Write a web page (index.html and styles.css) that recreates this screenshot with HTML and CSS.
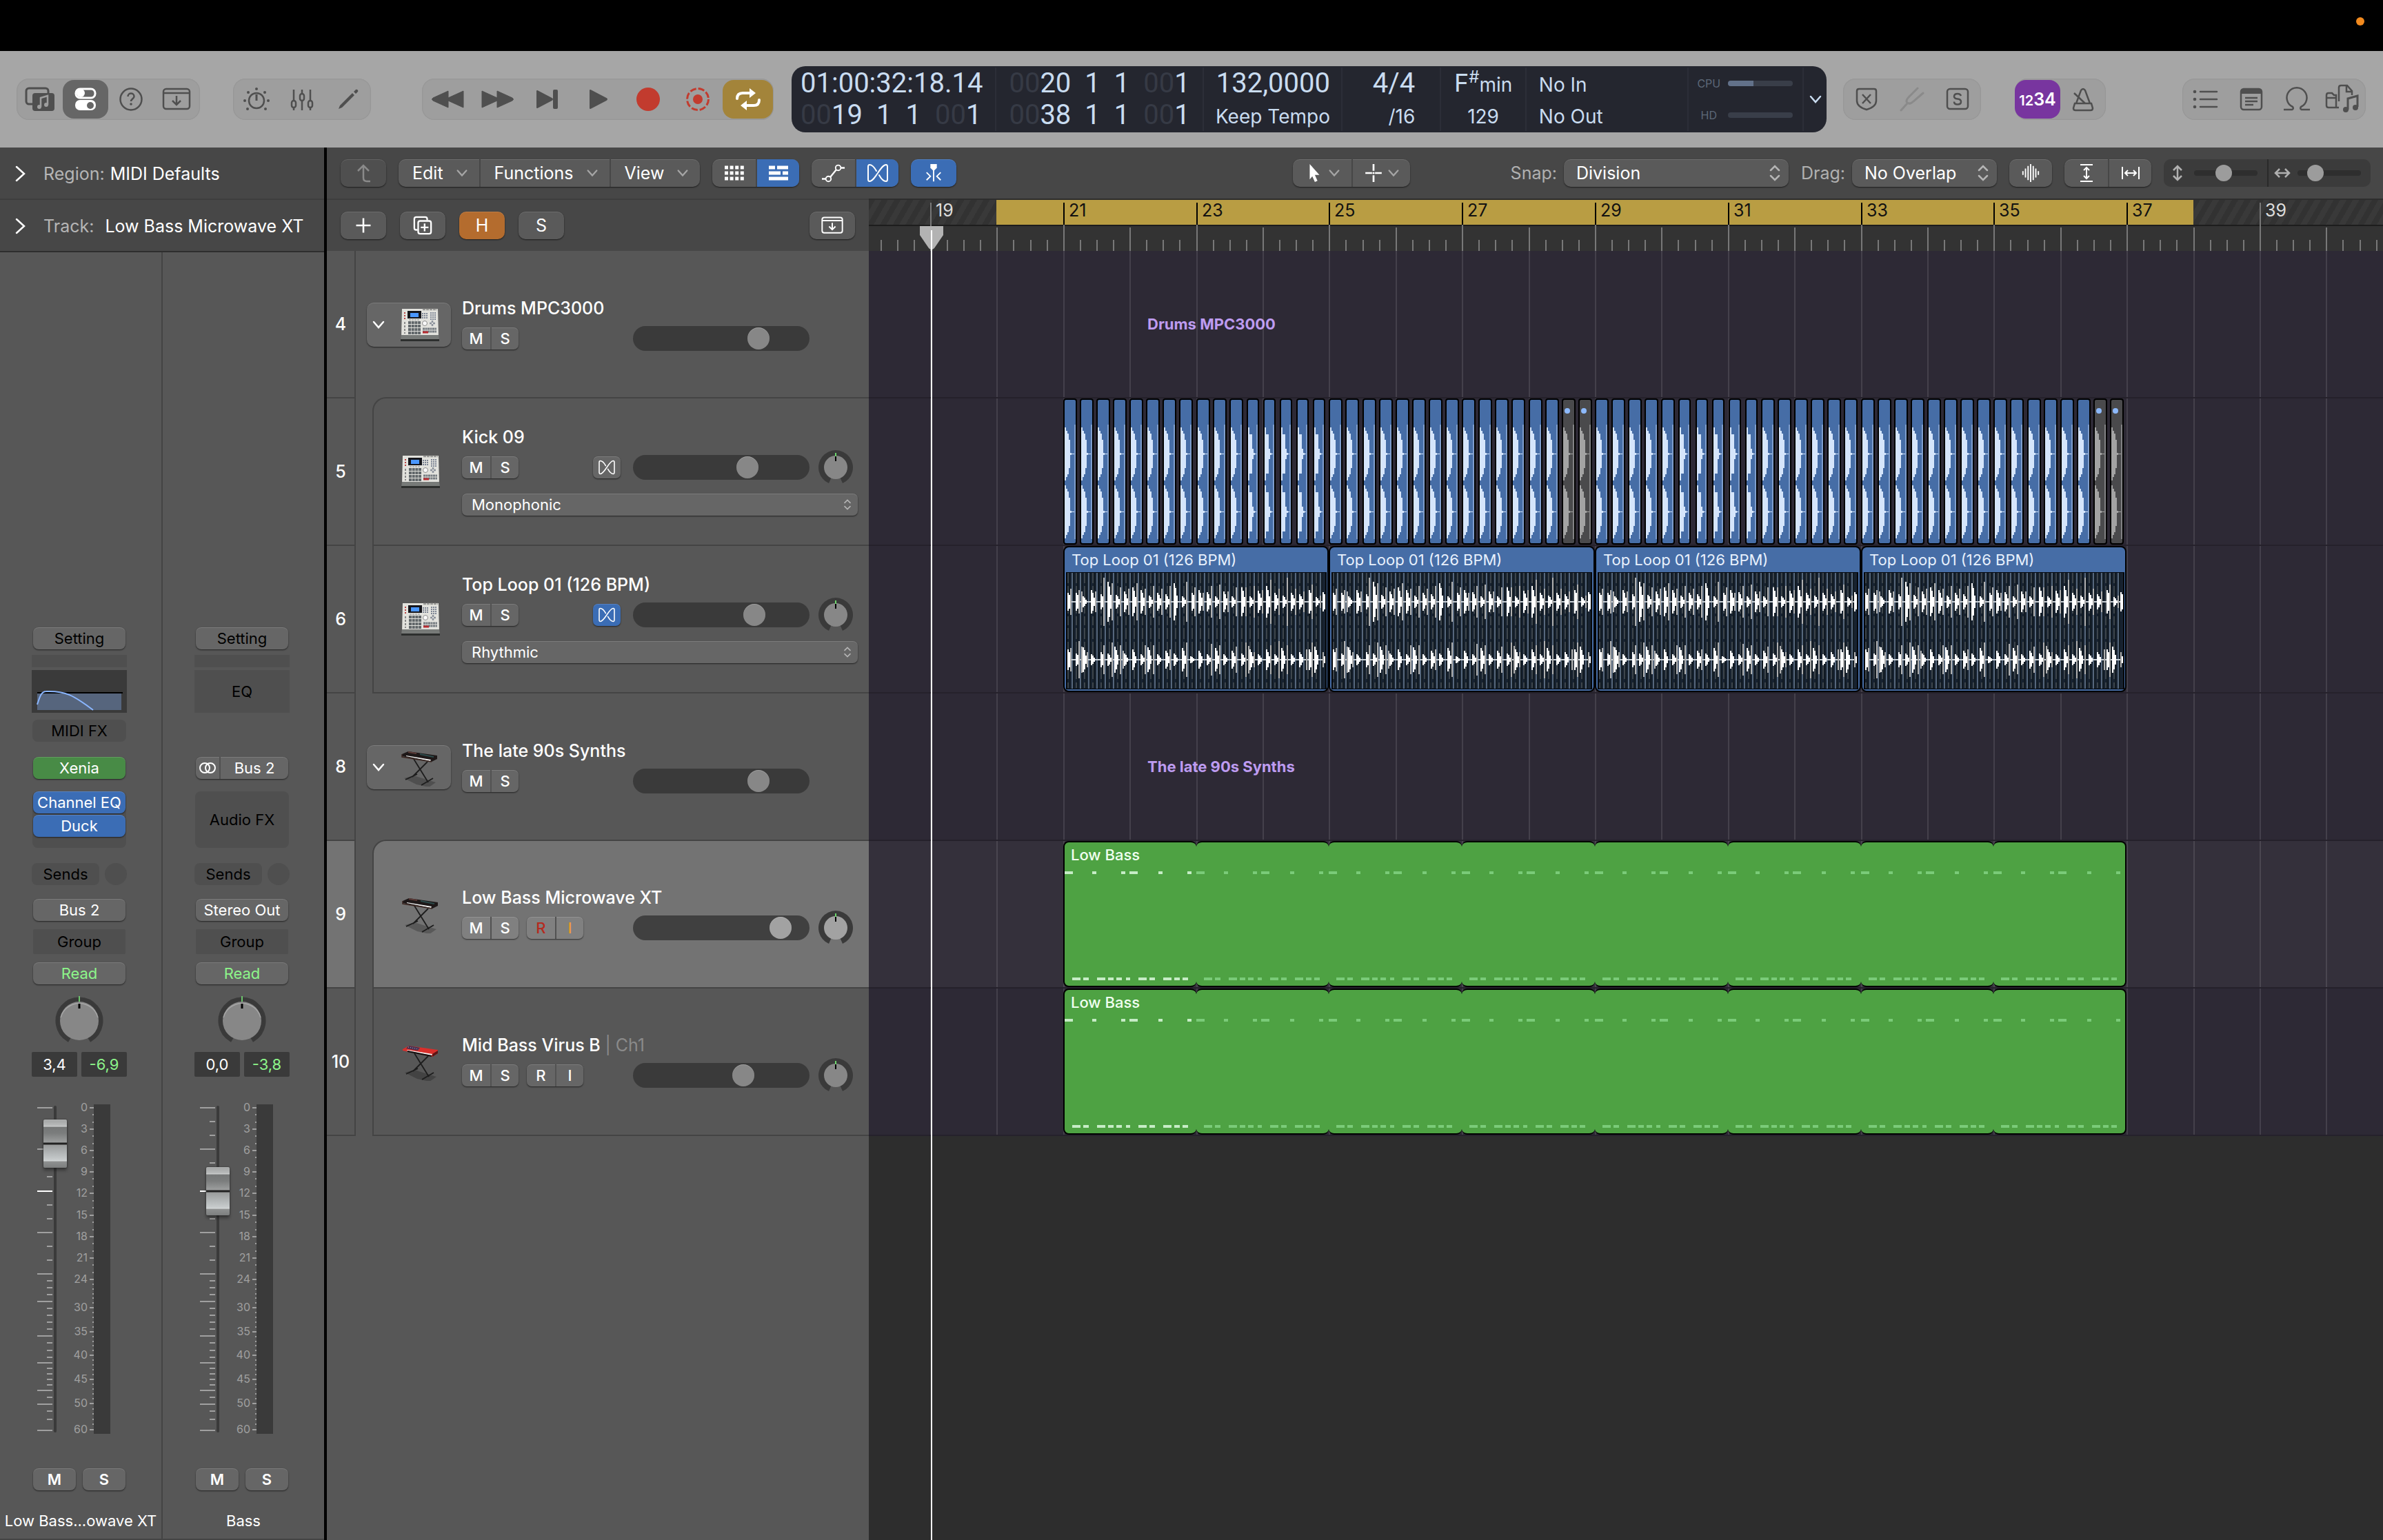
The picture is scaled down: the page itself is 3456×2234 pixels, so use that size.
FILE: index.html
```html
<!DOCTYPE html>
<html lang="en">
<head>
    <meta charset="UTF-8">
    <meta name="viewport" content="width=device-width, initial-scale=1.0">
    <title>Tracks</title>
    <link rel="stylesheet" href="styles.css">
</head>
<body>
    <!-- Icon sprite -->
    <svg class="sprite" aria-hidden="true">
        <symbol id="i-library" viewBox="0 0 44 36">
            <path d="M11 25H6a4 4 0 0 1-4-4V6a4 4 0 0 1 4-4h24a4 4 0 0 1 4 4v4" fill="none" stroke="currentColor" stroke-width="3"/>
            <rect x="11" y="9" width="32" height="26" rx="4" fill="currentColor"/>
            <path d="M23 29V16l10-3v13" fill="none" stroke="#9e9e9e" stroke-width="2.5"/>
            <circle cx="21" cy="29" r="3" fill="#9e9e9e"/><circle cx="31" cy="26" r="3" fill="#9e9e9e"/>
        </symbol>
        <symbol id="i-inspector" viewBox="0 0 44 36">
            <rect x="8" y="3" width="28" height="13" rx="6" fill="none" stroke="currentColor" stroke-width="3"/>
            <circle cx="15" cy="9" r="6" fill="currentColor"/>
            <rect x="7" y="19" width="30" height="15" rx="7" fill="currentColor"/>
            <circle cx="29" cy="27" r="5" fill="#666"/>
        </symbol>
        <symbol id="i-help" viewBox="0 0 44 36">
            <circle cx="22" cy="18" r="15.5" fill="none" stroke="currentColor" stroke-width="2.5"/>
            <path d="M17.5 14c0-6 9-6 9 0 0 3-4.5 3.5-4.5 7" fill="none" stroke="currentColor" stroke-width="2.5"/>
            <circle cx="22" cy="25" r="1.8" fill="currentColor"/>
        </symbol>
        <symbol id="i-tray" viewBox="0 0 44 36">
            <rect x="3" y="3" width="38" height="29" rx="4" fill="none" stroke="currentColor" stroke-width="2.5"/>
            <path d="M3 9h38M22 13v13M16 20l6 6 6-6" fill="none" stroke="currentColor" stroke-width="2.5"/>
        </symbol>
        <symbol id="i-controls" viewBox="0 0 44 36">
            <circle cx="22" cy="20" r="11" fill="none" stroke="currentColor" stroke-width="2.5"/>
            <path d="M22 11v9" stroke="currentColor" stroke-width="3"/>
            <g fill="currentColor"><circle cx="22" cy="3" r="2"/><circle cx="10" cy="8" r="2"/><circle cx="34" cy="8" r="2"/><circle cx="5" cy="20" r="2"/><circle cx="39" cy="20" r="2"/><circle cx="9" cy="32" r="2"/><circle cx="35" cy="32" r="2"/></g>
        </symbol>
        <symbol id="i-mixer" viewBox="0 0 44 36">
            <g fill="none" stroke="currentColor" stroke-width="2.5"><path d="M10 4v16M10 30v4M22 4v6M22 20v14M34 4v16M34 30v4"/><rect x="7" y="20" width="6" height="10" rx="3"/><rect x="19" y="10" width="6" height="10" rx="3"/><rect x="31" y="20" width="6" height="10" rx="3"/></g>
        </symbol>
        <symbol id="i-pencil" viewBox="0 0 44 36">
            <path d="M9 32l2-5L29 9l3 3-18 18zM31 7l3-3c2-1 4 1 3 3l-3 3z" fill="currentColor"/>
        </symbol>
        <symbol id="i-rewind" viewBox="0 0 48 36"><path d="M25 6v24L3 20q-3-2 0-4zM47 6v24L25 20q-3-2 0-4z" fill="currentColor" stroke="currentColor" stroke-linejoin="round"/></symbol>
        <symbol id="i-forward" viewBox="0 0 48 36"><path d="M1 6v24l22-10q3-2 0-4zM23 6v24l22-10q3-2 0-4z" fill="currentColor" stroke="currentColor" stroke-linejoin="round"/></symbol>
        <symbol id="i-next" viewBox="0 0 48 36"><path d="M9 6v24l21-11q2-1 0-2z" fill="currentColor" stroke="currentColor" stroke-width="2" stroke-linejoin="round"/><rect x="32" y="4" width="7" height="28" rx="2" fill="currentColor"/></symbol>
        <symbol id="i-play" viewBox="0 0 48 36"><path d="M13 5v26l23-12q2-1 0-2z" fill="currentColor" stroke="currentColor" stroke-width="2" stroke-linejoin="round"/></symbol>
        <symbol id="i-record" viewBox="0 0 48 36"><circle cx="24" cy="18" r="17" fill="currentColor"/></symbol>
        <symbol id="i-capture" viewBox="0 0 48 36"><circle cx="24" cy="18" r="7" fill="currentColor"/><circle cx="24" cy="18" r="15.5" fill="none" stroke="currentColor" stroke-width="3" stroke-dasharray="9.2 3"/></symbol>
        <symbol id="i-cycle" viewBox="0 0 48 36">
            <path d="M8 17q0-8 8-8h12M40 19q0 8-8 8H20" fill="none" stroke="currentColor" stroke-width="4" stroke-linecap="round"/>
            <path d="M26 2l9 7-9 7zM22 20l-9 7 9 7z" fill="currentColor"/>
        </symbol>
        <symbol id="i-replace" viewBox="0 0 44 36"><path d="M8 6q0-3 3-3h22q3 0 3 3v14q0 9-14 13Q8 29 8 20zM16 11l12 13M28 11L16 24" fill="none" stroke="currentColor" stroke-width="2.5"/></symbol>
        <symbol id="i-tuner" viewBox="0 0 44 36"><path d="M6 34l9-10M30 2L18 14q-6 6-3 9 4 3 9-2L38 9" fill="none" stroke="currentColor" stroke-width="3" stroke-linecap="round"/></symbol>
        <symbol id="i-solo" viewBox="0 0 44 36"><rect x="7" y="3" width="30" height="29" rx="4" fill="none" stroke="currentColor" stroke-width="2.5"/><path d="M27 13q-1-3-5-3-5 0-5 4 0 3 5 3.5 5 .5 5 4 0 4-5 4t-5-4" fill="none" stroke="currentColor" stroke-width="2.5"/></symbol>
        <symbol id="i-metronome" viewBox="0 0 44 36"><path d="M12 24l7-19q3-4 6 0l7 19M10 24h24l2 7q0 3-3 3H11q-3 0-3-3zM25 24L9 9" fill="none" stroke="currentColor" stroke-width="2.5"/></symbol>
        <symbol id="i-list" viewBox="0 0 44 36"><path d="M14 7h24M14 18h24M14 29h24" stroke="currentColor" stroke-width="2.5" stroke-linecap="round"/><g fill="currentColor"><circle cx="6" cy="7" r="2.3"/><circle cx="6" cy="18" r="2.3"/><circle cx="6" cy="29" r="2.3"/></g></symbol>
        <symbol id="i-notes" viewBox="0 0 44 36"><rect x="7" y="3" width="30" height="30" rx="4" fill="none" stroke="currentColor" stroke-width="2.5"/><path d="M7 10V6q0-3 3-3h24q3 0 3 3v4z" fill="currentColor"/><path d="M13 16h18M13 21h18M13 26h12" stroke="currentColor" stroke-width="2.5"/></symbol>
        <symbol id="i-loop" viewBox="0 0 44 36"><path d="M3 33h12q3-1 1-4a14.5 14.5 0 1 1 12 0q-2 3 1 4h12" fill="none" stroke="currentColor" stroke-width="2.5"/></symbol>
        <symbol id="i-media" viewBox="0 0 50 44"><path d="M20 34H5q-3 0-3-3V16q0-3 3-3h5l3 3h3v18M2 20h14M20 25V5q0-3 3-3h9l7 8v6M31 2v9h8" fill="none" stroke="currentColor" stroke-width="2.5"/><path d="M33 37V21l14-4v16" fill="none" stroke="currentColor" stroke-width="3"/><circle cx="30" cy="37" r="4" fill="currentColor"/><circle cx="44" cy="34" r="4" fill="currentColor"/></symbol>

        <symbol id="i-down" viewBox="0 0 20 20"><path d="M3 6l7 8 7-8" fill="none" stroke="currentColor" stroke-width="2.5" stroke-linecap="round"/></symbol>
        <symbol id="i-right" viewBox="0 0 16 24"><path d="M2 2l11 10L2 22" fill="none" stroke="currentColor" stroke-width="2.5" stroke-linecap="round"/></symbol>
        <symbol id="i-updown" viewBox="0 0 16 24"><path d="M2 8l6-6 6 6M2 16l6 6 6-6" fill="none" stroke="currentColor" stroke-width="2.5" stroke-linecap="round"/></symbol>
        <symbol id="i-up" viewBox="0 0 28 28"><path d="M24 26h-5q-5 0-5-5V3M6 11l8-8 8 8" fill="none" stroke="currentColor" stroke-width="2.5"/></symbol>
        <symbol id="i-dots" viewBox="0 0 28 28"><path d="M0 6h28M0 14h28M0 22h28" stroke="currentColor" stroke-width="5" stroke-dasharray="5 2.6"/></symbol>
        <symbol id="i-regions" viewBox="0 0 28 28"><path d="M0 6h9M12 6h16M0 14h17M20 14h8M0 22h28" stroke="currentColor" stroke-width="5"/></symbol>
        <symbol id="i-automation" viewBox="0 0 36 28"><path d="M0 23h6M13 20L22 9M29 6h6" stroke="currentColor" stroke-width="2.5"/><g fill="none" stroke="currentColor" stroke-width="2"><circle cx="10" cy="23" r="4"/><circle cx="25" cy="6" r="4"/></g></symbol>
        <symbol id="i-flex" viewBox="0 0 32 28"><path d="M14 11Q9 2 4 2 2 2 2 5v18q0 3 2 3c8 0 16-24 24-24q2 0 2 3v18q0 3-2 3-5 0-10-9" fill="none" stroke="currentColor" stroke-width="2" stroke-linecap="round"/></symbol>
        <symbol id="i-catch" viewBox="0 0 28 30"><path d="M9 1h10v6l-4 4h-2L9 7z" fill="currentColor"/><path d="M14 8v20M3 14l6 6-6 6M25 14l-6 6 6 6" fill="none" stroke="currentColor" stroke-width="2"/></symbol>
        <symbol id="i-pointer" viewBox="0 0 20 30"><path d="M3 1l15 17h-7l4 9-4 2-4-9-4 5z" fill="currentColor"/></symbol>
        <symbol id="i-cross" viewBox="0 0 24 26"><path d="M12 1v9M12 16v9M1 13h9M14 13h9" stroke="currentColor" stroke-width="2.5"/><circle cx="12" cy="13" r="1.5" fill="currentColor"/></symbol>
        <symbol id="i-wave" viewBox="0 0 28 30"><path d="M2 12v6M6 8v14M10 4v22M14 1v28M18 4v22M22 8v14M26 12v6" stroke="currentColor" stroke-width="2"/></symbol>
        <symbol id="i-fitv" viewBox="0 0 28 28"><path d="M5 2h18M5 26h18M14 6v16M10 10l4-4 4 4M10 18l4 4 4-4" fill="none" stroke="currentColor" stroke-width="2"/></symbol>
        <symbol id="i-fith" viewBox="0 0 28 28"><path d="M2 5v18M26 5v18M6 14h16M10 10l-4 4 4 4M18 10l4 4-4 4" fill="none" stroke="currentColor" stroke-width="2"/></symbol>
        <symbol id="i-vzoom" viewBox="0 0 24 24"><path d="M12 2v20M6 8l6-6 6 6M6 16l6 6 6-6" fill="none" stroke="currentColor" stroke-width="2.5"/></symbol>
        <symbol id="i-hzoom" viewBox="0 0 24 24"><path d="M2 12h20M8 6l-6 6 6 6M16 6l6 6-6 6" fill="none" stroke="currentColor" stroke-width="2.5"/></symbol>
        <symbol id="i-plus" viewBox="0 0 24 24"><path d="M12 3v18M3 12h18" stroke="currentColor" stroke-width="2.2"/></symbol>
        <symbol id="i-copy" viewBox="0 0 30 30"><g fill="none" stroke="currentColor" stroke-width="2.5"><path d="M7 22H5q-3 0-3-3V5q0-3 3-3h14q3 0 3 3v2"/><rect x="8" y="8" width="20" height="20" rx="3"/><path d="M18 12v12M12 18h12"/></g></symbol>
        <symbol id="i-stereo" viewBox="0 0 26 18"><g fill="none" stroke="currentColor" stroke-width="2"><circle cx="9" cy="9" r="7"/><circle cx="17" cy="9" r="7"/></g></symbol>

        <symbol id="i-knob" viewBox="0 0 72 72">
            <path d="M19.5 64.6A33 33 0 1 1 52.5 64.6L48.5 57.7A25 25 0 1 0 23.5 57.7z" fill="#3a3a3a" stroke="#3a3a3a" stroke-width="3"/>
            <circle cx="36" cy="36" r="28" fill="currentColor"/>
            <path d="M9 31a28 28 0 0 1 54 0" fill="none" stroke="#bbb" stroke-opacity=".6" stroke-width="1.5"/>
            <path d="M36 0v8" stroke="#6cc56c" stroke-width="2"/><path d="M36 11v7" stroke="#000" stroke-width="3"/>
        </symbol>
        <symbol id="i-knob-small" viewBox="0 0 52 52">
            <path d="M16 49A25 25 0 1 1 36 49L32 40H20z" fill="#3a3a3a"/>
            <circle cx="26" cy="26" r="17" fill="currentColor"/>
            <path d="M26 5v5" stroke="#6cd66c" stroke-width="2"/><path d="M26 10v7" stroke="#000" stroke-width="2"/>
        </symbol>
        <symbol id="i-mpc" viewBox="0 0 56 48">
            <path d="M2 1h52l1 42H1z" fill="#e2e2dd"/><path d="M1 39h54l1 7H0z" fill="#777a78"/><path d="M0 45h56v3H0z" fill="#2d2f2e"/>
            <rect x="10" y="4" width="20" height="11" fill="#15161c"/><rect x="14" y="7" width="12" height="6" fill="#4a97ff"/>
            <path d="M32 2h21" stroke="#9b9b98" stroke-width="2.5" stroke-dasharray="4 1"/>
            <path d="M31 8h8M31 11h8M31 14h8M43 7h8M43 10h8M43 13h8M43 16h8" stroke="#7d8594" stroke-width="2" stroke-dasharray="2 1"/>
            <path d="M12 17h16" stroke="#88898a" stroke-dasharray="3 1"/>
            <path d="M11 21h18M11 26h18M11 31h18M11 36h18" stroke="#61676a" stroke-width="4" stroke-dasharray="4 .7"/>
            <circle cx="35" cy="22" r="3.5" fill="#f8f8f8" stroke="#8d8d8b"/>
            <path d="M46 18v8M42 22h8" stroke="#8d939d" stroke-width="2.5" stroke-dasharray="3 2"/>
            <path d="M32 30h20M32 34h20" stroke="#777d82" stroke-width="3" stroke-dasharray="3 .5"/><path d="M32 35h8" stroke="#b52b30" stroke-width="3"/>
            <path d="M6 6v10" stroke="#b44" stroke-width="2" stroke-dasharray="2 2"/><path d="M6 20v17" stroke="#888" stroke-width="2" stroke-dasharray="3 2"/>
        </symbol>
        <symbol id="i-stand" viewBox="0 0 56 56">
            <path d="M5 44l14-4 32 10-10 7-18-4z" fill="#000" opacity=".22"/>
            <path d="M19 16l21 34M39 20L17 42M7 46l17-8M30 54l17-10" stroke="#1d1d1d" stroke-width="1.8" fill="none"/>
        </symbol>
        <symbol id="i-synth" viewBox="0 0 56 56">
            <use href="#i-stand"/>
            <path d="M2 9l9-4 42 6v5l-8 4L2 12z" fill="#1e1818"/><path d="M8 11l36 6-1 2L8 12z" fill="#f2f2f2"/><path d="M28 9l20 4" stroke="#2c4a4a" stroke-width="2"/><path d="M11 6l12 2" stroke="#5c3b38" stroke-width="2"/><path d="M2 9v4l43 7" fill="none" stroke="#3b2722" stroke-width="1.5"/>
        </symbol>
        <symbol id="i-virus" viewBox="0 0 56 56">
            <use href="#i-stand"/>
            <path d="M2 10l9-5 42 6v5l-8 5L2 12z" fill="#d92f2b"/><path d="M9 11l36 6-1 2L8 12z" fill="#f2f2f2"/><path d="M9 13l35 7" stroke="#111" stroke-width="2"/><path d="M11 5l16 3-3 4-17-3z" fill="#453252"/><path d="M10 7l15 3" stroke="#b9a4c9" stroke-dasharray="1 2"/><path d="M45 17l8-5v4l-8 5z" fill="#5d1414"/>
        </symbol>
    </svg>

    <div class="menubar"><span class="menubar-dot"></span></div>

    <header class="control-bar">
        <div class="pill-group">
            <button aria-label="Library"><svg><use href="#i-library"/></svg></button>
            <button class="on" aria-label="Inspector"><svg><use href="#i-inspector"/></svg></button>
            <button aria-label="Quick help"><svg><use href="#i-help"/></svg></button>
            <button aria-label="Toolbar"><svg><use href="#i-tray"/></svg></button>
        </div>
        <div class="pill-group views">
            <button aria-label="Smart controls"><svg><use href="#i-controls"/></svg></button>
            <button aria-label="Mixer"><svg><use href="#i-mixer"/></svg></button>
            <button aria-label="Editors"><svg><use href="#i-pencil"/></svg></button>
        </div>
        <div class="pill-group transport">
            <button aria-label="Rewind"><svg><use href="#i-rewind"/></svg></button>
            <button aria-label="Forward"><svg><use href="#i-forward"/></svg></button>
            <button aria-label="Go to position"><svg><use href="#i-next"/></svg></button>
            <button aria-label="Play"><svg><use href="#i-play"/></svg></button>
            <button class="rec" aria-label="Record"><svg><use href="#i-record"/></svg></button>
            <button class="rec" aria-label="Capture"><svg><use href="#i-capture"/></svg></button>
            <button class="cycle" aria-label="Cycle"><svg><use href="#i-cycle"/></svg></button>
        </div>

        <div class="lcd">
            <div class="lcd-cell">
                <div class="big">01:00:32:18.14</div>
                <div class="big beats"><span><i>00</i>19</span><span>1</span><span>1</span><span><i>00</i>1</span></div>
            </div>
            <div class="lcd-cell">
                <div class="big beats"><span><i>00</i>20</span><span>1</span><span>1</span><span><i>00</i>1</span></div>
                <div class="big beats"><span><i>00</i>38</span><span>1</span><span>1</span><span><i>00</i>1</span></div>
            </div>
            <div class="lcd-cell right">
                <div class="big">132,0000</div>
                <div class="small">Keep Tempo</div>
            </div>
            <div class="lcd-cell sig">
                <div class="big">4/4</div>
                <div class="small">/16</div>
            </div>
            <div class="lcd-cell center">
                <div><span class="key">F<sup>#</sup></span>min</div>
                <div class="small">129</div>
            </div>
            <div class="lcd-cell">
                <div class="small">No In</div>
                <div class="small">No Out</div>
            </div>
            <div class="lcd-cell load">
                <div><span>CPU</span><b><em></em></b></div>
                <div><span>HD</span><b></b></div>
            </div>
            <button class="lcd-more" aria-label="Display mode"><svg><use href="#i-down"/></svg></button>
        </div>

        <div class="pill-group modes">
            <button aria-label="Replace"><svg><use href="#i-replace"/></svg></button>
            <button class="dim" aria-label="Tuner"><svg><use href="#i-tuner"/></svg></button>
            <button aria-label="Solo"><svg><use href="#i-solo"/></svg></button>
        </div>
        <div class="pill-group click">
            <button class="count-in" aria-label="Count in"><small>12</small>34</button>
            <button aria-label="Metronome"><svg><use href="#i-metronome"/></svg></button>
        </div>
        <div class="pill-group">
            <button aria-label="List editors"><svg><use href="#i-list"/></svg></button>
            <button aria-label="Note pads"><svg><use href="#i-notes"/></svg></button>
            <button aria-label="Loop browser"><svg><use href="#i-loop"/></svg></button>
            <button aria-label="Browsers"><svg class="media"><use href="#i-media"/></svg></button>
        </div>
    </header>

    <main class="workspace">
        <aside class="inspector">
            <button class="inspector-head"><svg><use href="#i-right"/></svg><span>Region:</span> MIDI Defaults</button>
            <button class="inspector-head track-head"><svg><use href="#i-right"/></svg><span>Track:</span> Low Bass Microwave XT</button>

            <div class="strips">
                <section class="strip">
                    <button class="slot dark-text">Setting</button>
                    <div class="gain-bar"></div>
                    <div class="eq on">
                        <svg viewBox="0 0 138 62">
                            <path d="M8 34H130V58H8z" fill="#56657d"/>
                            <path d="M8 33H132" stroke="#000" stroke-width="2"/>
                            <path d="M8 50C12 38 14 31 21 31C48 30 60 36 89 58" fill="none" stroke="#8ab6ff" stroke-width="2"/>
                        </svg>
                    </div>
                    <button class="well">MIDI FX</button>
                    <button class="slot green">Xenia</button>
                    <div class="fx"><button class="slot blue">Channel EQ</button><button class="slot blue">Duck</button></div>
                    <div class="sends"><button class="well">Sends</button><span></span></div>
                    <button class="slot">Bus 2</button>
                    <button class="well group">Group</button>
                    <button class="slot read">Read</button>
                    <svg class="pan"><use href="#i-knob"/></svg>
                    <div class="values"><output>3,4</output><output class="peak">-6,9</output></div>
                    <div class="fader"><svg class="scale"></svg><input type="range" min="0" max="1000" value="946" aria-label="Low Bass volume"></div>
                    <div class="ms"><button>M</button><button>S</button></div>
                    <div class="strip-name">Low Bass...owave XT</div>
                </section>
                <section class="strip">
                    <button class="slot dark-text">Setting</button>
                    <div class="gain-bar"></div>
                    <div class="eq">EQ</div>
                    <div class="well blank"></div>
                    <div class="slot input"><button aria-label="Stereo format"><svg><use href="#i-stereo"/></svg></button><button>Bus 2</button></div>
                    <button class="fx empty">Audio FX</button>
                    <div class="sends"><button class="well">Sends</button><span></span></div>
                    <button class="slot">Stereo Out</button>
                    <button class="well group">Group</button>
                    <button class="slot read">Read</button>
                    <svg class="pan"><use href="#i-knob"/></svg>
                    <div class="values"><output>0,0</output><output class="peak">-3,8</output></div>
                    <div class="fader"><svg class="scale"></svg><input type="range" min="0" max="1000" value="777" aria-label="Bass volume"></div>
                    <div class="ms"><button>M</button><button>S</button></div>
                    <div class="strip-name">Bass</div>
                </section>
            </div>
        </aside>

        <div class="arrange">
            <div class="arrange-bar">
                <button class="btn faded" aria-label="Up"><svg><use href="#i-up"/></svg></button>
                <div class="btn-group menus">
                    <button>Edit<svg><use href="#i-down"/></svg></button>
                    <button>Functions<svg><use href="#i-down"/></svg></button>
                    <button>View<svg><use href="#i-down"/></svg></button>
                </div>
                <div class="btn-group">
                    <button aria-label="Grid"><svg><use href="#i-dots"/></svg></button>
                    <button class="blue" aria-label="Regions"><svg><use href="#i-regions"/></svg></button>
                </div>
                <div class="btn-group">
                    <button aria-label="Automation"><svg class="wide"><use href="#i-automation"/></svg></button>
                    <button class="blue" aria-label="Flex"><svg class="wide"><use href="#i-flex"/></svg></button>
                </div>
                <button class="btn blue" aria-label="Catch"><svg><use href="#i-catch"/></svg></button>

                <div class="btn-group tools">
                    <button aria-label="Pointer tool"><svg><use href="#i-pointer"/></svg><svg class="chev"><use href="#i-down"/></svg></button>
                    <button aria-label="Marquee tool"><svg><use href="#i-cross"/></svg><svg class="chev"><use href="#i-down"/></svg></button>
                </div>

                <div class="bar-right">
                    <label class="pick snap">Snap: <span class="select"><select><option>Division</option></select><svg><use href="#i-updown"/></svg></span></label>
                    <label class="pick drag">Drag: <span class="select"><select><option>No Overlap</option></select><svg><use href="#i-updown"/></svg></span></label>
                    <button class="btn" aria-label="Waveform zoom"><svg><use href="#i-wave"/></svg></button>
                    <div class="btn-group">
                        <button aria-label="Fit vertically"><svg><use href="#i-fitv"/></svg></button>
                        <button aria-label="Fit horizontally"><svg><use href="#i-fith"/></svg></button>
                    </div>
                    <div class="zooms">
                        <label><svg><use href="#i-vzoom"/></svg><input type="range" value="46" aria-label="Vertical zoom"></label>
                        <label><svg><use href="#i-hzoom"/></svg><input type="range" value="20" aria-label="Horizontal zoom"></label>
                    </div>
                </div>
            </div>

            <div class="arrange-body">
                <div class="tracks">
                    <div class="tracks-bar">
                        <button class="btn" aria-label="Add track"><svg><use href="#i-plus"/></svg></button>
                        <button class="btn" aria-label="Duplicate track"><svg><use href="#i-copy"/></svg></button>
                        <button class="btn orange">H</button>
                        <button class="btn">S</button>
                        <button class="btn last" aria-label="Header configuration"><svg class="wide"><use href="#i-tray"/></svg></button>
                    </div>

                    <div class="track stack">
                        <div class="track-num">4</div>
                        <div class="track-body">
                            <button class="stack-toggle" aria-label="Drums MPC3000"><svg class="chev"><use href="#i-down"/></svg><svg class="inst"><use href="#i-mpc"/></svg></button>
                            <div class="track-main">
                                <div class="track-name">Drums MPC3000</div>
                                <div class="track-controls">
                                    <div class="mini"><button>M</button><button>S</button></div>
                                    <input class="vol" type="range" min="0" max="1000" value="745" aria-label="Volume"><span class="no-pan"></span>
                                </div>
                            </div>
                        </div>
                    </div>
                    <div class="track nested first">
                        <div class="track-num">5</div>
                        <div class="track-body">
                            <svg class="inst"><use href="#i-mpc"/></svg>
                            <div class="track-main">
                                <div class="track-name">Kick 09</div>
                                <div class="track-controls">
                                    <div class="mini"><button>M</button><button>S</button></div>
                                    <button class="flex-btn" aria-label="Flex"><svg><use href="#i-flex"/></svg></button>
                                    <input class="vol" type="range" min="0" max="1000" value="673" aria-label="Volume">
                                    <svg class="pan"><use href="#i-knob-small"/></svg>
                                </div>
                                <span class="select flex-mode"><select aria-label="Flex mode"><option>Monophonic</option></select><svg><use href="#i-updown"/></svg></span>
                            </div>
                        </div>
                    </div>
                    <div class="track nested">
                        <div class="track-num">6</div>
                        <div class="track-body">
                            <svg class="inst"><use href="#i-mpc"/></svg>
                            <div class="track-main">
                                <div class="track-name">Top Loop 01 (126 BPM)</div>
                                <div class="track-controls">
                                    <div class="mini"><button>M</button><button>S</button></div>
                                    <button class="flex-btn blue" aria-label="Flex"><svg><use href="#i-flex"/></svg></button>
                                    <input class="vol" type="range" min="0" max="1000" value="718" aria-label="Volume">
                                    <svg class="pan"><use href="#i-knob-small"/></svg>
                                </div>
                                <span class="select flex-mode"><select aria-label="Flex mode"><option>Rhythmic</option></select><svg><use href="#i-updown"/></svg></span>
                            </div>
                        </div>
                    </div>
                    <div class="track stack">
                        <div class="track-num">8</div>
                        <div class="track-body">
                            <button class="stack-toggle" aria-label="The late 90s Synths"><svg class="chev"><use href="#i-down"/></svg><svg class="inst tall"><use href="#i-synth"/></svg></button>
                            <div class="track-main">
                                <div class="track-name">The late 90s Synths</div>
                                <div class="track-controls">
                                    <div class="mini"><button>M</button><button>S</button></div>
                                    <input class="vol" type="range" min="0" max="1000" value="745" aria-label="Volume"><span class="no-pan"></span>
                                </div>
                            </div>
                        </div>
                    </div>
                    <div class="track nested first selected">
                        <div class="track-num">9</div>
                        <div class="track-body">
                            <svg class="inst tall"><use href="#i-synth"/></svg>
                            <div class="track-main">
                                <div class="track-name">Low Bass Microwave XT</div>
                                <div class="track-controls">
                                    <div class="mini"><button>M</button><button>S</button></div>
                                    <div class="mini"><button class="arm">R</button><button class="mon">I</button></div>
                                    <input class="vol" type="range" min="0" max="1000" value="890" aria-label="Volume">
                                    <svg class="pan"><use href="#i-knob-small"/></svg>
                                </div>
                            </div>
                        </div>
                    </div>
                    <div class="track nested">
                        <div class="track-num">10</div>
                        <div class="track-body">
                            <svg class="inst tall"><use href="#i-virus"/></svg>
                            <div class="track-main">
                                <div class="track-name">Mid Bass Virus B <span>| Ch1</span></div>
                                <div class="track-controls">
                                    <div class="mini"><button>M</button><button>S</button></div>
                                    <div class="mini"><button>R</button><button>I</button></div>
                                    <input class="vol" type="range" min="0" max="1000" value="645" aria-label="Volume">
                                    <svg class="pan"><use href="#i-knob-small"/></svg>
                                </div>
                            </div>
                        </div>
                    </div>
                </div>

                <div class="timeline">
                    <div class="ruler">
                        <div class="cycle-lane"><div class="cycle-range" id="cycleRange"></div></div>
                        <div id="ticks"></div>
                    </div>
                    <div class="lanes">
                        <div class="lane label">Drums MPC3000</div>
                        <div class="lane" id="kickLane"></div>
                        <div class="lane" id="loopLane"></div>
                        <div class="lane label">The late 90s Synths</div>
                        <div class="lane selected midi"></div>
                        <div class="lane midi"></div>
                    </div>
                    <div class="playhead"><svg viewBox="0 0 34 34"><path d="M0 0h34v13L21 32q-4 4-8 0L0 13z" fill="#b3b3b3"/></svg></div>
                </div>
            </div>
        </div>
    </main>

    <script src="script.js"></script>
</body>
</html>
```
FILE: styles.css
```css
:root {
    --panel: #575757;
    --header: #474747;
    --line: #444444;
    --btn: #5a5a5a;
    --slot: #666666;
    --dark: #3a3a3a;
    --blue: #3b6db5;
    --region: #466da6;
    --green: #4ea243;
    --yellow: #b99d43;
    --row: 214px;
}

* {
    margin: 0;
    padding: 0;
    box-sizing: border-box;
}

body {
    height: 100vh;
    display: flex;
    flex-direction: column;
    overflow: hidden;
    background: #2d2d2d;
    color: #ffffff;
    font-family: Inter, Roboto, sans-serif;
    font-size: 25px;
    line-height: 32px;
}

button,
select {
    font: inherit;
    color: inherit;
    border: none;
    background: none;
    white-space: nowrap;
}

svg {
    display: block;
    flex: none;
}

.sprite {
    position: absolute;
    width: 0;
    height: 0;
}

.menubar {
    height: 74px;
    flex: none;
    padding: 25px 27px;
    background: #000000;
    display: flex;
    justify-content: flex-end;
}

.menubar-dot {
    width: 12px;
    height: 12px;
    border-radius: 50%;
    background: #f28a1e;
}

/* Control bar */
.control-bar {
    height: 140px;
    flex: none;
    display: flex;
    align-items: center;
    padding: 0 25px 0 24px;
    background: #a6a6a6;
}

.pill-group {
    height: 60px;
    display: flex;
    padding: 2px 1px;
    border-radius: 18px;
    background: #9e9e9e;
    box-shadow: inset 0 0 2px rgba(0,0,0,0.15);
    color: #4f4f4f;
}

.pill-group button {
    width: 66px;
    display: flex;
    align-items: center;
    justify-content: center;
    border-radius: 16px;
}

.pill-group svg {
    width: 44px;
    height: 36px;
}

.pill-group svg.media {
    width: 50px;
    height: 44px;
}

.pill-group .on {
    background: #666666;
    color: #ffffff;
}

.pill-group .dim {
    color: #8a8a8a;
}

.views {
    margin: 0 74px 0 48px;
}

.transport {
    width: 510px;
    margin-right: 26px;
}

.transport button {
    flex: 1;
}

.transport svg {
    width: 48px;
    height: 36px;
}

.transport .rec {
    color: #c23b2e;
}

.transport .cycle {
    background: #a3843a;
    color: #ffffff;
}

.modes {
    margin: 0 49px 0 24px;
}

.click {
    margin-right: 111px;
    padding: 2px 0;
}

.pill-group .count-in {
    background: #78359f;
    color: #ffffff;
    font-weight: 600;
    align-items: baseline;
    line-height: 56px;
}

.count-in small {
    font-size: 20px;
}

.lcd {
    flex: 1;
    height: 96px;
    display: grid;
    grid-template-columns: 297fr 298fr 202fr 144fr 124fr 236fr 168fr 33fr;
    border-radius: 20px;
    background: #24262f;
    color: #c9dcf0;
    font-size: 28px;
    overflow: hidden;
}

.lcd-cell {
    display: grid;
    grid-template-rows: 46px 46px;
    align-items: center;
    margin: 2px 0;
    padding: 0 18px;
    border-right: 2px solid #2c2e38;
    white-space: nowrap;
}

.lcd-cell:first-child {
    padding-left: 13px;
}

.lcd .big {
    font-family: Roboto, sans-serif;
    font-size: 40px;
}

.lcd .small {
    padding-top: 4px;
}

.beats {
    display: flex;
    gap: 20px;
}

.beats i {
    font-style: normal;
    color: #363a45;
}

.lcd-cell.right {
    text-align: right;
    padding: 0 16px 0 0;
}

.lcd-cell.sig {
    text-align: right;
    padding-right: 36px;
}

.lcd-cell.center {
    text-align: center;
    padding: 0;
}

.key {
    font-size: 36px;
}

.key sup {
    font-size: 24px;
    line-height: 0;
}

.load {
    padding: 0 14px 0 10px;
    font-size: 16px;
    color: #5d6878;
}

.load div {
    display: flex;
    align-items: center;
}

.load span {
    width: 39px;
    text-align: center;
}

.load b {
    flex: 1;
    margin-left: 8px;
    height: 8px;
    border-radius: 4px;
    background: #393e49;
    overflow: hidden;
}

.load em {
    display: block;
    width: 39%;
    height: 8px;
    background: #62718a;
}

.lcd-more {
    display: flex;
    align-items: center;
    justify-content: center;
}

.lcd-more svg {
    width: 20px;
    height: 20px;
}

/* Inspector */
.workspace {
    flex: 1;
    min-height: 0;
    display: flex;
    background: #000000;
}

.inspector {
    width: 470px;
    margin-right: 4px;
    display: flex;
    flex-direction: column;
    background: var(--panel);
}

.inspector-head {
    height: 76px;
    flex: none;
    display: flex;
    align-items: center;
    padding: 2px 0 0 22px;
    background: var(--header);
    border-bottom: 2px solid #3e3e3e;
}

.inspector-head.track-head {
    border-bottom: 2px solid #2e2e2e;
}

.inspector-head svg {
    width: 16px;
    height: 24px;
    margin-right: 25px;
}

.inspector-head span {
    margin-right: 8px;
    color: #b5b5b5;
}

.inspector-head.track-head span {
    margin-right: 16px;
}

.strips {
    flex: 1;
    display: flex;
}

.strip {
    flex: 1;
    display: flex;
    flex-direction: column;
    align-items: center;
    justify-content: flex-end;
    padding: 0 4px 12px 0;
    border-right: 2px solid var(--line);
    border-bottom: 2px solid var(--line);
    font-size: 22px;
}

.strip:last-child {
    border-right: none;
}

.slot,
.ms button,
.mini,
.flex-btn,
.stack-toggle,
.flex-mode {
    background: var(--slot);
    box-shadow: inset 0 1px 0 rgba(255,255,255,0.15), 0 1px 2px rgba(0,0,0,0.6);
}

.slot {
    width: 134px;
    height: 32px;
    flex: none;
    border-radius: 8px;
    line-height: 32px;
}

.dark-text,
.well,
.eq,
.fx.empty {
    color: #000000;
}

.gain-bar {
    width: 138px;
    height: 18px;
    margin: 8px 0 4px;
    background: #4f4f4f;
}

.eq {
    width: 138px;
    height: 62px;
    line-height: 62px;
    margin-bottom: 10px;
    text-align: center;
    background: #4f4f4f;
}

.eq.on {
    background: #3a3a3a;
}

.well {
    width: 136px;
    height: 32px;
    flex: none;
    border-radius: 8px;
    background: #4f4f4f;
}

.well.blank {
    background: none;
}

.well + .slot {
    margin-top: 22px;
}

.green {
    background: #488b46;
}

.blue {
    background: var(--blue) !important;
}

.fx {
    width: 136px;
    height: 82px;
    flex: none;
    margin: 18px 0 22px;
    display: flex;
    flex-direction: column;
    align-items: center;
    gap: 2px;
    border-radius: 8px;
    background: #4f4f4f;
}

.fx.empty {
    justify-content: center;
}

.sends {
    width: 138px;
    display: flex;
    justify-content: space-between;
    margin-bottom: 20px;
}

.sends .well {
    width: 98px;
}

.sends span {
    width: 32px;
    height: 32px;
    border-radius: 50%;
    background: #4f4f4f;
}

.well.group {
    width: 134px;
    height: 36px;
    margin: 12px 0;
    border-radius: 2px;
}

.well.group + .slot {
    margin-top: 0;
}

.read,
.peak {
    color: #8df58a;
}

.input {
    display: flex;
}

.input button {
    flex: 1;
}

.input button:first-child {
    flex: none;
    width: 36px;
    display: flex;
    align-items: center;
    justify-content: center;
    border-right: 2px solid #505050;
}

.input svg {
    width: 26px;
    height: 18px;
}

.strip .pan {
    width: 72px;
    height: 72px;
    margin: 17px 0 9px;
    color: #878787;
}

.values {
    width: 138px;
    display: flex;
    justify-content: space-between;
}

.values output {
    width: 66px;
    height: 36px;
    line-height: 36px;
    text-align: center;
    border-radius: 2px;
    background: var(--dark);
}

.fader {
    position: relative;
    width: 122px;
    height: 478px;
    flex: none;
    margin: 40px 0 50px;
}

.scale {
    width: 122px;
    height: 478px;
    overflow: visible;
    font-size: 16px;
    fill: #a0a0a0;
}

/* the cap slides over the printed scale */
.fader input {
    position: absolute;
    left: 9px;
    top: 0;
    width: 34px;
    height: 478px;
    writing-mode: vertical-lr;
    direction: rtl;
    appearance: none;
    background: none;
}

.fader input::-webkit-slider-thumb {
    appearance: none;
    width: 34px;
    height: 70px;
    border-radius: 2px;
    background: linear-gradient(#a9abab 0 3px, #b9bbbb 9px, #d5d7d7 10px, #757777 11px, #7b7d7d 20px, #9c9e9e 33px, #222222 34px 36px, #9a9c9c 37px, #b5b9ba 50px, #c9cdce 59px, #dadede 60px, #8f9191 61px, #7c7e7e);
    box-shadow: 0 0 2px #222222, 0 4px 4px rgba(0,0,0,0.35);
}

.ms {
    display: flex;
    gap: 10px;
}

.ms button {
    width: 62px;
    height: 32px;
    border-radius: 8px;
    line-height: 32px;
    font-weight: 600;
}

.strip-name {
    margin-top: 30px;
    padding-left: 4px;
    line-height: 28px;
    white-space: nowrap;
}

/* Arrange toolbar */
.arrange {
    flex: 1;
    min-width: 0;
    display: flex;
    flex-direction: column;
}

.arrange-bar {
    height: 74px;
    flex: none;
    display: flex;
    align-items: center;
    gap: 18px;
    padding: 0 18px 0 20px;
    background: var(--header);
}

.btn,
.btn-group,
.bar-right .select {
    height: 40px;
    background: var(--btn);
    border-radius: 10px;
    box-shadow: inset 0 1px 0 rgba(255,255,255,0.12), 0 1px 2px rgba(0,0,0,0.6);
}

.btn {
    width: 66px;
    display: flex;
    align-items: center;
    justify-content: center;
    line-height: 40px;
}

.faded {
    background: #4f4f4f;
    color: #8a8a8a;
}

.btn-group {
    display: flex;
    overflow: hidden;
}

.btn-group button {
    width: 63px;
    display: flex;
    align-items: center;
    justify-content: center;
}

.btn-group button + button {
    border-left: 2px solid #474747;
}

.btn svg,
.btn-group svg {
    width: 28px;
    height: 28px;
}

.btn svg.wide,
.btn-group svg.wide {
    width: 34px;
    height: 28px;
}

.menus button {
    width: auto;
    padding: 0 16px 0 20px;
    gap: 18px;
}

.menus button svg,
.tools .chev {
    width: 18px;
    height: 18px;
    color: #a5a5a5;
}

.tools {
    margin-left: 470px;
}

.tools button {
    width: 85px;
    gap: 6px;
}

.bar-right {
    margin-left: auto;
    display: flex;
    align-items: center;
    gap: 18px;
}

.pick {
    display: flex;
    align-items: center;
    gap: 10px;
    color: #b0b0b0;
}

.select {
    position: relative;
    display: flex;
    color: #ffffff;
}

.select select {
    appearance: none;
    width: 100%;
    padding-left: 18px;
    outline: none;
}

.select svg {
    position: absolute;
    right: 12px;
    top: 8px;
    width: 16px;
    height: 24px;
    color: #b5b5b5;
    pointer-events: none;
}

.snap .select {
    width: 326px;
}

.drag .select {
    width: 210px;
}

.bar-right > .btn {
    width: 62px;
}

.zooms {
    height: 40px;
    display: flex;
    border-radius: 10px;
    background: #3b3b3b;
}

.zooms label {
    width: 150px;
    display: flex;
    align-items: center;
    justify-content: space-between;
    padding: 0 14px 0 8px;
}

.zooms label + label {
    border-left: 2px solid #2a2a2a;
}

.zooms svg {
    width: 24px;
    height: 24px;
    color: #b0b0b0;
}

.zooms input {
    appearance: none;
    width: 92px;
    height: 8px;
    border-radius: 4px;
    background: #2e2e2e;
}

.zooms input::-webkit-slider-thumb {
    appearance: none;
    width: 24px;
    height: 24px;
    border-radius: 50%;
    background: #9c9c9c;
}

/* Track headers */
.arrange-body {
    flex: 1;
    min-height: 0;
    display: flex;
}

.tracks {
    width: 786px;
    flex: none;
    background: var(--panel);
}

.tracks-bar {
    height: 76px;
    display: flex;
    align-items: center;
    gap: 20px;
    padding: 0 20px;
    background: var(--header);
    border-top: 2px solid #3e3e3e;
}

.tracks-bar .last {
    margin-left: auto;
}

.orange {
    background: #b46c2e;
}

.track {
    height: var(--row);
    display: flex;
}

.track-num {
    width: 42px;
    flex: none;
    display: flex;
    align-items: center;
    justify-content: center;
    font-weight: 500;
    border-right: 2px solid var(--line);
    border-bottom: 2px solid var(--line);
}

.track-body {
    flex: 1;
    display: flex;
    align-items: center;
    gap: 16px;
    margin-left: 16px;
    padding-right: 16px;
}

.nested .track-body {
    margin-left: 24px;
    padding-left: 40px;
    gap: 32px;
    border-left: 2px solid var(--line);
    border-bottom: 2px solid var(--line);
}

.nested.first .track-body {
    border-top: 2px solid var(--line);
    border-top-left-radius: 20px;
    margin-top: -2px;
}

.selected .track-body,
.selected .track-num {
    background: #737373;
}

.stack-toggle {
    width: 122px;
    height: 64px;
    display: flex;
    align-items: center;
    gap: 22px;
    padding-left: 7px;
    border-radius: 10px;
}

.stack-toggle .chev {
    width: 20px;
    height: 20px;
}

.inst {
    width: 56px;
    height: 48px;
}

.inst.tall {
    height: 56px;
}

.track-main {
    flex: 1;
}

.track-name {
    line-height: 28px;
    margin-bottom: 12px;
    font-weight: 500;
    white-space: nowrap;
}

.track-name span {
    font-weight: 400;
    color: #8a8a8a;
}

.track-controls {
    height: 36px;
    display: flex;
    align-items: center;
    gap: 12px;
}

.mini {
    height: 32px;
    display: flex;
    border-radius: 7px;
    font-size: 22px;
    font-weight: 500;
}

.mini button {
    width: 41px;
}

.mini button + button {
    border-left: 2px solid #525252;
}

.selected .mini {
    background: #808080;
}

.arm {
    color: #b52a1e;
}

.mon {
    color: #ee9c2f;
}

.flex-btn {
    width: 40px;
    height: 32px;
    margin-left: auto;
    margin-right: 6px;
    display: flex;
    align-items: center;
    justify-content: center;
    border-radius: 7px;
}

.flex-btn svg {
    width: 26px;
    height: 22px;
}

.vol {
    appearance: none;
    width: 256px;
    height: 36px;
    margin-left: auto;
    padding: 0 2px;
    border-radius: 18px;
    background: var(--dark);
}

.flex-btn + .vol {
    margin-left: 0;
}

.vol::-webkit-slider-thumb {
    appearance: none;
    width: 32px;
    height: 32px;
    border-radius: 50%;
    background: #878787;
    box-shadow: inset 0 1px 0 rgba(255,255,255,0.2);
}

.selected .vol {
    background: #404040;
}

.selected .vol::-webkit-slider-thumb {
    background: #a2a2a2;
}

.track-controls .pan,
.no-pan {
    width: 52px;
    height: 52px;
    margin-right: 6px;
    color: #878787;
}

.selected .track-controls .pan {
    color: #a2a2a2;
}

.flex-mode {
    height: 32px;
    margin-top: 20px;
    border-radius: 7px;
    font-size: 22px;
}

.flex-mode select {
    padding-left: 14px;
}

.flex-mode svg {
    right: 9px;
    width: 12px;
    height: 16px;
}

/* Timeline */
.timeline {
    position: relative;
    flex: 1;
    min-width: 0;
    overflow: hidden;
    background: #2d2d2d;
}

.ruler {
    position: relative;
    height: 76px;
    background: #333333;
    border-top: 2px solid #2d2d2d;
}

.cycle-lane {
    height: 38px;
    background: repeating-linear-gradient(120deg, #323232 0 8px, #393939 8px 16px);
    border-bottom: 2px solid #1d1d1d;
}

.cycle-range {
    position: absolute;
    top: 0;
    height: 36px;
    background: var(--yellow);
}

.tick {
    position: absolute;
    bottom: 0;
    width: 2px;
    height: 16px;
    background: #787878;
}

.tick.bar {
    height: 34px;
}

.tick.major {
    height: 70px;
}

.tick.major.in-cycle {
    background: linear-gradient(#000000 0 32px, #787878 32px);
}

.bar-label {
    position: absolute;
    top: 0;
    line-height: 30px;
    color: #dddddd;
}

.bar-label.in-cycle {
    color: #111111;
}

.lane {
    position: relative;
    height: var(--row);
    background: #2d2935;
    border-bottom: 2px solid #25212b;
}

.lane.selected {
    background: #34303b;
}

.lane.label {
    display: flex;
    align-items: center;
    padding-left: 404px;
    font-size: 22px;
    font-weight: 700;
    color: #bd9bf0;
}

.grid-line {
    position: absolute;
    top: 0;
    bottom: 0;
    width: 2px;
    background: rgba(255,255,255,0.11);
}

.region {
    position: absolute;
    z-index: 1;
    top: 0;
    height: 212px;
}

.kick {
    width: 20px;
    border: 2px solid #000000;
    border-radius: 4px;
    background: var(--region);
}

.kick.short {
    width: 18px;
}

.kick.muted {
    background: #4a4a4c;
}

.loop {
    border: 2px solid #000000;
    border-radius: 8px;
    background: var(--region);
    color: #e8f1fd;
    font-size: 22px;
    line-height: 36px;
    padding-left: 10px;
    white-space: nowrap;
}

.loop svg {
    margin-left: -10px;
}

.midi-part {
    border-top: 2px solid #000000;
    border-bottom: 2px solid #000000;
    border-radius: 8px;
    background: var(--green);
    font-size: 22px;
    font-weight: 500;
    line-height: 36px;
    color: #f0fff0;
}

.midi-part.head {
    border-left: 2px solid #000000;
    padding-left: 9px;
}

.midi-part.tail {
    border-right: 2px solid #000000;
}

.midi-part svg {
    position: absolute;
    left: 0;
    top: 0;
}

.playhead {
    position: absolute;
    z-index: 2;
    left: 90px;
    top: 40px;
    bottom: 0;
    width: 2px;
    background: #f2f2f2;
}

.playhead svg {
    width: 34px;
    height: 34px;
    margin-left: -16px;
}

.playhead::before {
    content: "";
    position: absolute;
    top: 6px;
    width: 2px;
    height: 30px;
    background: #ffffff;
}
```
FILE: script.js
```js
const BAR = 96.4;          // width of one bar
const BAR_21 = 281.7;      // where bar 21 starts inside the timeline
const CYCLE = [20, 38];

const barX = bar => Math.round(BAR_21 + (bar - 21) * BAR);

function add(parent, className, left, text) {
    const el = document.createElement('div');
    el.className = className;
    if (left !== undefined) el.style.left = left + 'px';
    if (text) el.textContent = text;
    parent.appendChild(el);
    return el;
}

const rect = (x, y, w, h, fill) => `<rect x="${x}" y="${y}" width="${w}" height="${h}" fill="${fill}"/>`;

// Ruler and grid
const ticks = document.getElementById('ticks');
const lanes = document.querySelectorAll('.lane');

const cycleRange = document.getElementById('cycleRange');
cycleRange.style.left = barX(CYCLE[0]) + 'px';
cycleRange.style.width = barX(CYCLE[1]) - barX(CYCLE[0]) + 'px';

for (let q = 18 * 4 + 1; q < 41 * 4; q++) {
    const bar = q / 4;
    const x = barX(bar);
    if (x < 4) continue;
    if (q % 4) {
        add(ticks, 'tick', x);
        continue;
    }
    const inCycle = bar >= CYCLE[0] && bar < CYCLE[1] ? ' in-cycle' : '';
    if (bar % 2) {
        add(ticks, 'tick major' + inCycle, x);
        add(ticks, 'bar-label' + inCycle, x + 8, String(bar));
    } else {
        add(ticks, 'tick bar', x);
    }
    lanes.forEach(lane => add(lane, 'grid-line', x));
}

// Kick slices: half-height of each 2px column
const longHit = [39, 34, 30, 21, 2, 1, 1];
const shortHit = [39, 29, 29, 8, 2, 1];

const kickLane = document.getElementById('kickLane');
for (let i = 0; i < 64; i++) {
    const n = i % 32;
    const short = i < 32 ? (n > 10 && n < 16) : (n > 4 && n < 10);
    const muted = n > 29;
    const region = add(kickLane, 'region kick' + (short ? ' short' : '') + (muted ? ' muted' : ''), barX(21 + i / 4) + (short ? 1 : 0));
    const w = short ? 14 : 16;
    const light = muted ? '#a3a3a3' : '#d5e5fb';
    let out = rect(w - 2, 36, 2, 166, muted ? '#828284' : '#7e9dcc');
    [79, 163].forEach(mid => {
        (short ? shortHit : longHit).forEach((h, c) => {
            out += rect(c * 2, mid - h, 2, h * 2 - 1, light);
        });
    });
    if (muted) out += '<circle cx="6" cy="16" r="4" fill="#8db9fb"/>';
    region.innerHTML = `<svg width="${w}" height="208">${out}</svg>`;
}

// Loop waveform: [x, half-height] of transients and bodies per channel
const loopWave = [
    {
        mid: 42,
        grey: [[10,19],[22,17],[26,15],[46,15],[58,35],[70,27],[82,21],[94,19],[106,27],[118,19],[130,23],[142,19],[154,23],[178,29],[190,21],[202,13],[214,23],[226,25],[238,15],[250,21],[264,21],[276,23],[288,17],[300,32],[312,19],[324,35],[336,19],[348,15],[360,25],[372,9]],
        white: [[6,13],[18,13],[28,8],[40,17],[54,11],[64,29],[76,10],[88,15],[100,21],[112,17],[124,9],[136,13],[148,11],[160,27],[172,8],[186,13],[196,17],[208,14],[220,8],[232,15],[244,8],[258,21],[270,8],[282,16],[294,23],[306,13],[318,9],[330,13],[342,11],[356,17],[366,7],[376,14]]
    },
    {
        mid: 126,
        grey: [[10,17],[22,27],[26,19],[34,11],[58,21],[70,25],[82,21],[86,13],[118,21],[130,21],[154,15],[178,25],[214,23],[226,21],[250,19],[264,25],[268,20],[276,11],[300,21],[312,27],[324,21],[352,15],[360,25],[376,11]],
        white: [[6,15],[18,9],[28,18],[40,8],[54,11],[64,9],[74,19],[88,9],[100,15],[112,8],[122,18],[136,8],[148,13],[160,9],[172,17],[184,5],[196,13],[208,8],[220,17],[232,8],[244,13],[258,9],[270,15],[282,8],[294,15],[306,8],[316,17],[330,8],[342,11],[356,15],[364,19],[376,7]]
    }
];

function drawLoop() {
    let out = rect(2, 0, 378, 170, '#05070a') + rect(4, 1, 374, 168, '#172230');
    for (let x = 8; x < 378; x += 12) {
        out += rect(x - 2, 1, 2, 168, '#111a22') + rect(x + 4, 1, 2, 168, '#111a22');
        out += rect(x + 2, 1, 2, 168, '#56677c');
        [[1, 15], [20, 40], [64, 13], [81, 16], [101, 54], [160, 8]].forEach(([y, h]) => {
            out += rect(x - 4, y, 2, h, '#3d454c');
        });
    }
    loopWave.forEach(ch => {
        out += rect(4, ch.mid, 374, 2, '#c9d0d6');
        ch.white.forEach(([x, h]) => {
            [1, 0.75, 0.35].forEach((k, c) => {
                const hh = Math.max(2, Math.round(h * k));
                if (x + c * 2 < 380) out += rect(x - 2 + c * 2, ch.mid + 1 - hh, 2, hh * 2, '#ffffff');
            });
        });
        ch.grey.forEach(([x, h]) => out += rect(x - 2, ch.mid + 1 - h, 2, h * 2, '#b0b0b0'));
    });
    return `<svg width="382" height="172">${out}</svg>`;
}

const loopLane = document.getElementById('loopLane');
for (let bar = 21; bar < 37; bar += 4) {
    const region = add(loopLane, 'region loop', barX(bar), 'Top Loop 01 (126 BPM)');
    region.style.width = barX(bar + 4) - barX(bar) + 'px';
    region.insertAdjacentHTML('beforeend', drawLoop());
}

// Looped MIDI parts, two bars each
const highNotes = [[0,12],[40,6],[82,6],[94,12],[136,6],[178,6]];
const lowNotes = [[11,12],[27,8],[47,12],[63,8],[75,8],[89,6],[107,12],[123,8],[143,12],[159,8],[171,8]];

document.querySelectorAll('.lane.midi').forEach(lane => {
    for (let bar = 21; bar < 37; bar += 2) {
        const head = bar === 21;
        const part = add(lane, 'region midi-part' + (head ? ' head' : '') + (bar === 35 ? ' tail' : ''), barX(bar), head ? 'Low Bass' : '');
        const w = barX(bar + 2) - barX(bar);
        part.style.width = w + 'px';
        const fill = head ? '#c6ecc6' : '#7acb79';
        const notes = highNotes.map(n => rect(n[0], 42, n[1], 4, fill)).join('') + lowNotes.map(n => rect(n[0], 196, n[1], 4, fill)).join('');
        part.insertAdjacentHTML('beforeend', `<svg width="${w - 2}" height="208">${notes}</svg>`);
    }
});

// Fader and meter scales
const longTicks = [3,63,124,184,244,284,334,373,413,433,471];
const shortTicks = [23,43,83,103,144,164,204,224,254,264,274,294,304,314,324,344,355,365,381,389,397,405,423,443,455];
const dbMarks = [[0,5],[3,36],[6,67],[9,98],[12,129],[15,161],[18,192],[21,223],[24,254],[30,295],[35,330],[40,364],[45,399],[50,434],[60,472]];

document.querySelectorAll('.scale').forEach(svg => {
    let out = '<rect x="24" y="2" width="4" height="474" rx="2" fill="#3a3a3a"/>' + rect(82, 0, 24, 478, '#3a3a3a');
    longTicks.forEach(y => out += rect(0, y + 1, 22, 2, y === 124 ? '#ffffff' : '#a0a0a0'));
    shortTicks.forEach(y => out += rect(14, y + 1, 8, 2, '#a0a0a0'));
    dbMarks.forEach(([db, y], i) => {
        out += rect(76, y - 1, 6, 2, '#a0a0a0') + `<text x="73" y="${y + 5}" text-anchor="end">${db}</text>`;
        const next = dbMarks[i + 1];
        if (!next) return;
        const steps = db < 24 ? 3 : db === 24 ? 6 : 5;
        for (let s = 1; s < steps; s++) {
            out += rect(80, Math.round(y + (next[1] - y) * s / steps) - 1, 2, 2, '#a0a0a0');
        }
    });
    svg.innerHTML = out;
});
```
